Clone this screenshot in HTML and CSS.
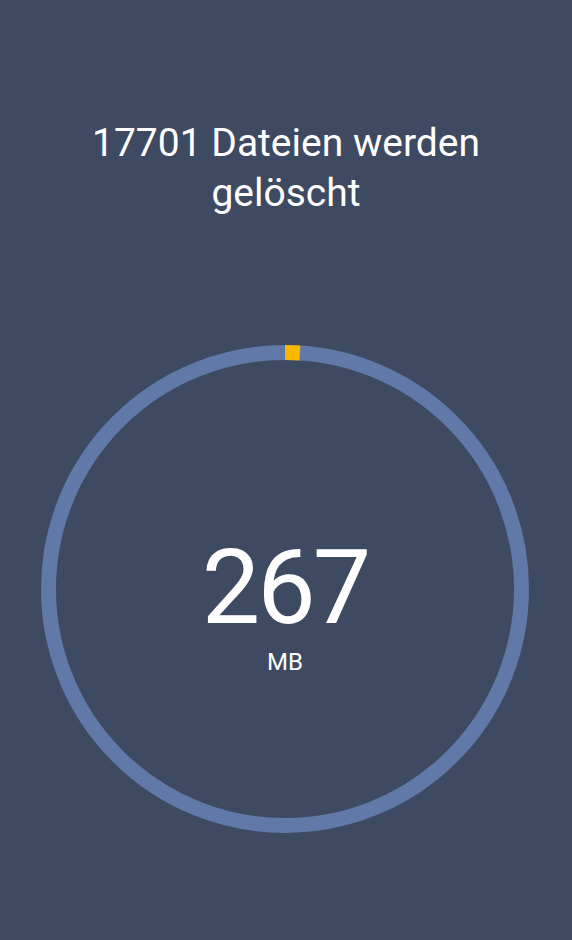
FILE: index.html
```html
<!DOCTYPE html>
<html>

<head>
  <meta charset="UTF-8">
  <title>Dateien werden gelöscht</title>
  <link rel="stylesheet" href="styles.css">
</head>

<body>
  <h1 class="title">17701 Dateien werden<br>gelöscht</h1>
  <div class="ring">
    <svg class="ring-svg" width="488" height="488" viewBox="0 0 488 488">
      <circle cx="244" cy="244" r="236.5" fill="none" stroke="#6079a8" stroke-width="15" />
      <circle cx="244" cy="244" r="236.5" fill="none" stroke="#f9b700" stroke-width="15"
        stroke-dasharray="15 2000" transform="rotate(-90 244 244)" />
    </svg>
    <div class="ring-label">
      <span class="amount">267</span>
      <span class="unit">MB</span>
    </div>
  </div>
</body>

</html>
```

FILE: styles.css
```css
body {
  margin: 0;
  height: 940px;
  background-color: #3d4a61;
  color: #ffffff;
  font-family: Roboto, "Open Sans", sans-serif;
  display: flex;
  flex-direction: column;
  align-items: center;
}

.title {
  margin: 118px 0 0;
  font-size: 39px;
  font-weight: 400;
  line-height: 50px;
  text-align: center;
}

.ring {
  position: relative;
  width: 488px;
  height: 488px;
  margin-top: 127px;
  margin-left: -2px;
}

.ring-svg {
  display: block;
}

.ring-label {
  position: absolute;
  inset: 0;
  display: flex;
  flex-direction: column;
  align-items: center;
  justify-content: center;
}

.amount {
  font-size: 104px;
  line-height: 1;
  margin-top: 33px;
  letter-spacing: -3px;
}

.unit {
  font-size: 24px;
  margin-top: 8px;
}
```
